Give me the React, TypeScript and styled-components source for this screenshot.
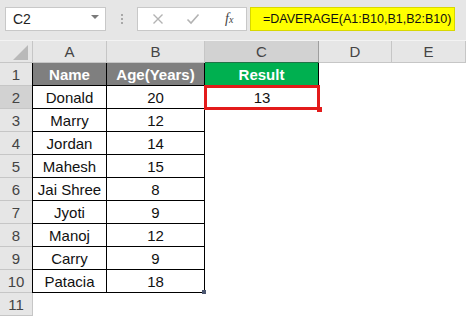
import styled, { createGlobalStyle } from "styled-components";

const GlobalStyle = createGlobalStyle`
    html, body {
        margin: 0;
        padding: 0;
        background: #ffffff;
    }
    body {
        font-family: "Liberation Sans", Arial, sans-serif;
        width: 466px;
        height: 318px;
        overflow: hidden;
    }
`;

const rows = [
    { name: "Donald", age: 20 },
    { name: "Marry", age: 12 },
    { name: "Jordan", age: 14 },
    { name: "Mahesh", age: 15 },
    { name: "Jai Shree", age: 8 },
    { name: "Jyoti", age: 9 },
    { name: "Manoj", age: 12 },
    { name: "Carry", age: 9 },
    { name: "Patacia", age: 18 },
];

const columns = ["A", "B", "C", "D", "E"];

const App = () => {
    return (
        <Page>
            <GlobalStyle />
            <Toolbar>
                <NameBox>
                    <span>C2</span>
                    <DropArrow />
                </NameBox>
                <Dots>
                    <i />
                    <i />
                    <i />
                </Dots>
                <FormulaButtons>
                    <svg width="12" height="12" viewBox="0 0 12 12">
                        <path d="M1.5 1.5 L10.5 10.5 M10.5 1.5 L1.5 10.5" stroke="#b3b3b3" strokeWidth="1.4" fill="none" />
                    </svg>
                    <svg width="14" height="12" viewBox="0 0 14 12">
                        <path d="M1.5 6.5 L5 10 L12.5 1.5" stroke="#b3b3b3" strokeWidth="1.6" fill="none" />
                    </svg>
                    <Fx>
                        f<sub>x</sub>
                    </Fx>
                </FormulaButtons>
                <FormulaInput>=DAVERAGE(A1:B10,B1,B2:B10)</FormulaInput>
            </Toolbar>

            <Sheet>
                <Corner>
                    <svg width="16" height="15" viewBox="0 0 16 15">
                        <polygon points="15,0 15,15 0,15" fill="#b9b9b9" />
                    </svg>
                </Corner>
                {columns.map((c) => (
                    <ColHeader key={c} $selected={c === "C"}>
                        {c}
                    </ColHeader>
                ))}
                <ColHeader $selected={false} />

                <RowHeader $selected={false}>1</RowHeader>
                <TitleCell $bg="#7f7f7f" $first>
                    Name
                </TitleCell>
                <TitleCell $bg="#7f7f7f">Age(Years)</TitleCell>
                <TitleCell $bg="#00b050" $plain>
                    Result
                </TitleCell>
                <Empty />
                <Empty />
                <Empty />

                {rows.map((r, i) => {
                    const n = i + 2;
                    return [
                        <RowHeader key={`h${n}`} $selected={n === 2}>
                            {n}
                        </RowHeader>,
                        <DataCell key={`a${n}`} $first>
                            {r.name}
                        </DataCell>,
                        <DataCell key={`b${n}`} $handle={n === 10}>
                            {r.age}
                        </DataCell>,
                        n === 2 ? (
                            <ActiveCell key={`c${n}`}>13</ActiveCell>
                        ) : (
                            <Empty key={`c${n}`} />
                        ),
                        <Empty key={`d${n}`} />,
                        <Empty key={`e${n}`} />,
                        <Empty key={`f${n}`} />,
                    ];
                })}

                <RowHeader $selected={false}>11</RowHeader>
                <Empty />
                <Empty />
                <Empty />
                <Empty />
                <Empty />
                <Empty />
            </Sheet>
        </Page>
    );
};

const Page = styled.div`
    width: 466px;
    height: 318px;
    display: flex;
    flex-direction: column;
    background: #ffffff;
    overflow: hidden;
`;

const Toolbar = styled.div`
    height: 41px;
    box-sizing: border-box;
    padding: 7px 0 0 5px;
    display: flex;
    align-items: flex-start;
    background: #e6e6e6;
    border-bottom: 1px solid #f3f3f3;
`;

const NameBox = styled.div`
    width: 101px;
    height: 24px;
    box-sizing: border-box;
    background: #ffffff;
    border: 1px solid #c8c8c8;
    display: flex;
    align-items: center;
    justify-content: space-between;
    padding: 0 6px 0 7px;
    font-size: 14px;
    color: #222222;
`;

const DropArrow = styled.div`
    width: 0;
    height: 0;
    border-left: 4px solid transparent;
    border-right: 4px solid transparent;
    border-top: 4px solid #7a7a7a;
    margin-bottom: 4px;
`;

const Dots = styled.div`
    width: 31px;
    height: 24px;
    display: flex;
    flex-direction: column;
    align-items: center;
    justify-content: center;
    gap: 2px;

    i {
        display: block;
        width: 2px;
        height: 2px;
        background: #a8a8a8;
    }
`;

const FormulaButtons = styled.div`
    width: 110px;
    height: 24px;
    box-sizing: border-box;
    background: #ffffff;
    border: 1px solid #c8c8c8;
    display: flex;
    align-items: center;
    padding: 0 8px 0 14px;
    gap: 22px;
`;

const Fx = styled.span`
    margin-left: 3px;
    font-family: "Liberation Serif", "Times New Roman", serif;
    font-style: italic;
    font-size: 14px;
    color: #444444;

    sub {
        font-size: 10px;
        vertical-align: 0;
    }
`;

const FormulaInput = styled.div`
    margin-left: 3px;
    width: 205px;
    height: 24px;
    box-sizing: border-box;
    background: #ffff00;
    border: 1px solid #d8d800;
    display: flex;
    align-items: center;
    padding-left: 12px;
    font-size: 12.5px;
    color: #111111;
    white-space: nowrap;
`;

const Sheet = styled.div`
    display: grid;
    grid-template-columns: 33px 74px 98px 114px 73px 74px 1fr;
    grid-template-rows: 22px repeat(11, 23px);
    font-size: 15px;
`;

const Corner = styled.div`
    background: #e6e6e6;
    border-right: 1px solid #c6c6c6;
    border-bottom: 1px solid #c6c6c6;
    box-sizing: border-box;
    display: flex;
    align-items: flex-end;
    justify-content: flex-end;
    padding: 0 3px 2px 0;
`;

const ColHeader = styled.div<{ $selected: boolean }>`
    box-sizing: border-box;
    background: ${(p) => (p.$selected ? "#d2d2d2" : "#e6e6e6")};
    border-right: 1px solid ${(p) => (p.$selected ? "#9e9e9e" : "#c6c6c6")};
    border-bottom: 1px solid ${(p) => (p.$selected ? "#217346" : "#c6c6c6")};
    display: flex;
    align-items: center;
    justify-content: center;
    color: #444444;
    font-size: 15px;
`;

const RowHeader = styled.div<{ $selected: boolean }>`
    box-sizing: border-box;
    background: ${(p) => (p.$selected ? "#d2d2d2" : "#e6e6e6")};
    border-bottom: 1px solid #c6c6c6;
    border-right: 1px solid ${(p) => (p.$selected ? "#217346" : "#c6c6c6")};
    display: flex;
    align-items: center;
    justify-content: center;
    color: #444444;
    font-size: 15px;
`;

const TitleCell = styled.div<{ $bg: string; $first?: boolean; $plain?: boolean }>`
    box-sizing: border-box;
    background: ${(p) => p.$bg};
    color: #ffffff;
    font-weight: bold;
    display: flex;
    align-items: center;
    justify-content: center;
    border-bottom: 1px solid ${(p) => (p.$plain ? p.$bg : "#000000")};
    border-right: 1px solid #000000;
    border-left: ${(p) => (p.$first ? "1px solid #000000" : "none")};
    margin-left: ${(p) => (p.$first ? "-1px" : "0")};
`;

const DataCell = styled.div<{ $first?: boolean; $handle?: boolean }>`
    position: relative;
    box-sizing: border-box;
    display: flex;
    align-items: center;
    justify-content: center;
    color: #111111;
    border-bottom: 1px solid #000000;
    border-right: 1px solid #000000;
    border-left: ${(p) => (p.$first ? "1px solid #000000" : "none")};
    margin-left: ${(p) => (p.$first ? "-1px" : "0")};

    ${(p) =>
        p.$handle &&
        `
        &::after {
            content: "";
            position: absolute;
            right: -2px;
            bottom: -2px;
            width: 4px;
            height: 4px;
            background: #4b5670;
        }
    `}
`;

const ActiveCell = styled.div`
    position: relative;
    box-sizing: border-box;
    display: flex;
    align-items: center;
    justify-content: center;
    color: #111111;
    outline: 3px solid #e31b1b;
    outline-offset: -2px;
    z-index: 1;

    &::after {
        content: "";
        position: absolute;
        right: -3px;
        bottom: -3px;
        width: 5px;
        height: 5px;
        background: #e31b1b;
    }
`;

const Empty = styled.div`
    background: #ffffff;
`;

export default App;
